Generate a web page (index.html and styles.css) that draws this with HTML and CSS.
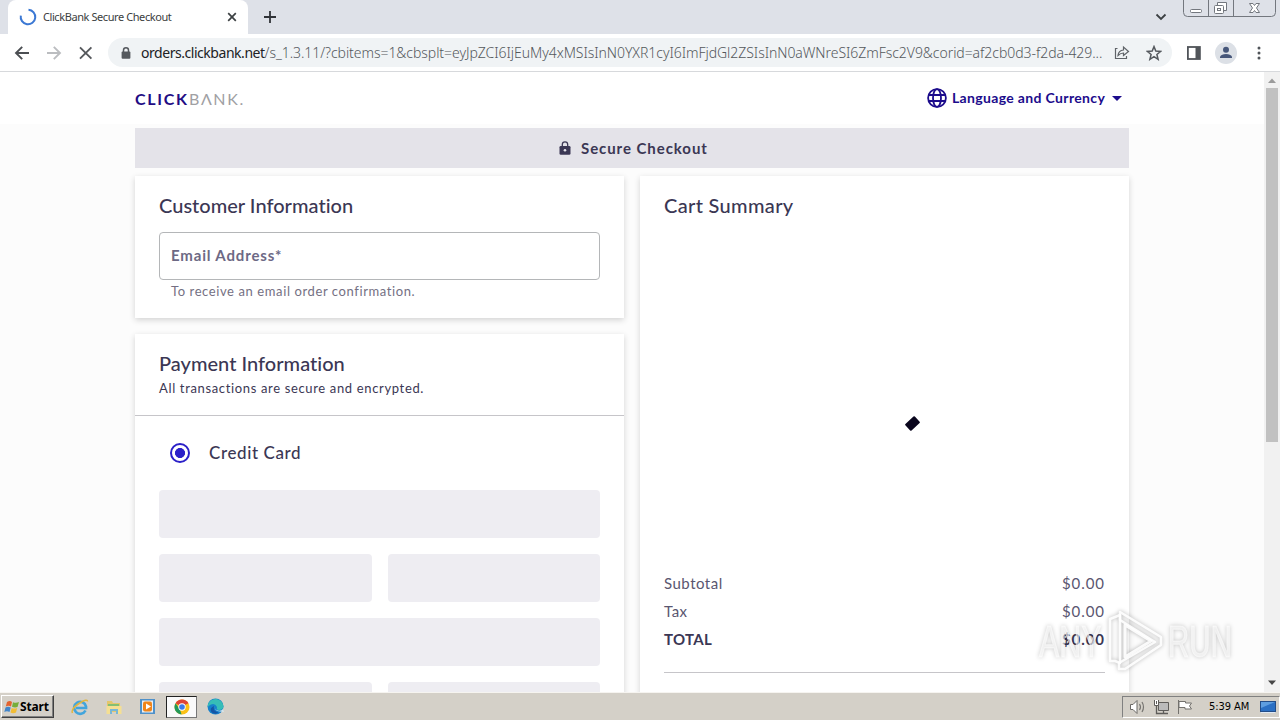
FILE: index.html
```html
<!DOCTYPE html>
<html lang="en">
<head>
<meta charset="utf-8">
<title>ClickBank Secure Checkout</title>
<link rel="stylesheet" href="styles.css">
</head>
<body>
<div class="screen">
  <header class="tabstrip">
    <div class="tab-edge"></div>
    <div class="tab">
      <svg class="spinner" width="18" height="18" viewBox="0 0 18 18"><path d="M9.5 1.7A7.3 7.3 0 1 1 1.8 7.6" fill="none" stroke="#3b78d4" stroke-width="2"/></svg>
      <span class="tab-title">ClickBank Secure Checkout</span>
      <svg width="10" height="10" viewBox="0 0 10 10"><path d="M1.2 1.2 8.8 8.8M8.8 1.2 1.2 8.8" stroke="#3c4043" stroke-width="1.7"/></svg>
    </div>
    <svg class="plus" width="12" height="12" viewBox="0 0 12 12"><path d="M6 0V12M0 6H12" stroke="#303338" stroke-width="1.8"/></svg>
    <svg class="chevron" width="12" height="8" viewBox="0 0 12 8"><path d="M1.5 1.5 6 6 10.5 1.5" fill="none" stroke="#3c4043" stroke-width="1.8"/></svg>
    <svg class="window-buttons" width="94" height="18" viewBox="0 0 94 18"><g fill="none" stroke="#73777e"><path d="M.5 0V12.5Q.5 16.5 4.500 16.500H88.500Q92.500 16.500 92.500 12.500V0M25.500 0V16M50.500 0V16"/><rect x="7.500" y="9.500" width="11" height="3" rx="1" fill="#fff"/><path d="M34.500 5V2.500H43.500V10.500H41" fill="#fff"/><rect x="31.500" y="5.500" width="9" height="8" rx="1" fill="#fff"/><rect x="34.500" y="8.500" width="3" height="2"/><path d="M66.500 3.500H70L71.500 5.500 73 3.500H76.500L73.500 8 76.500 12.500H73L71.500 10.500 70 12.500H66.500L69.500 8Z" fill="#fff"/></g></svg>
  </header>
  <nav class="toolbar">
    <svg class="nav-icons" width="80" height="16" viewBox="0 0 80 16"><g fill="none" stroke-width="1.9"><path d="M15 8H2M8.200 1.800 2 8 8.200 14.200" stroke="#4b4e52"/><path d="M33 8H46M39.800 1.800 46 8 39.800 14.200" stroke="#bbbdc0"/><path d="M66 2.300 77.400 13.700M77.400 2.300 66 13.700" stroke="#55585c"/></g></svg>
    <div class="omnibox">
      <svg class="lock" width="10" height="12" viewBox="0 0 10 12"><path d="M2.500 5V3.300A2.500 2.500 0 0 1 7.500 3.300V5" fill="none" stroke="#55595e" stroke-width="1.500"/><rect x=".6" y="4.500" width="8.800" height="7.300" rx="1" fill="#55595e"/></svg>
      <span class="url"><span class="host">orders.clickbank.net</span><span class="path">/s_1.3.11/?cbitems=1&amp;cbsplt=eyJpZCI6IjEuMy4xMSIsInN0YXR1cyI6ImFjdGl2ZSIsInN0aWNreSI6ZmFsc2V9&amp;corid=af2cb0d3-f2da-429...</span></span>
      <svg class="share" width="16" height="15" viewBox="0 0 16 15"><path d="M3.500 3.500H1.500V13.500H12.500V11M4 10.500Q4.500 5.500 9.500 5V2L14.500 6.500 9.500 10.500V8Q6.500 8 4 10.500Z" fill="none" stroke="#5f6368" stroke-width="1.200"/></svg>
      <svg width="16" height="16" viewBox="0 0 16 16"><path d="M8 1.600 9.800 6.100 14.700 6.400 10.900 9.500 12.100 14.300 8 11.600 3.900 14.300 5.100 9.500 1.300 6.400 6.200 6.100Z" fill="none" stroke="#55595e" stroke-width="1.500"/></svg>
    </div>
    <svg class="panel" width="14" height="14" viewBox="0 0 14 14"><rect x=".9" y="1" width="12" height="12" fill="#fff" stroke="#505459" stroke-width="1.800"/><path d="M8.500 1H13V13H8.500Z" fill="#505459"/></svg>
    <svg class="avatar" width="22" height="22" viewBox="0 0 22 22"><circle cx="11" cy="11" r="11" fill="#dce0e6"/><circle cx="11" cy="7.800" r="3" fill="#47577a"/><path d="M5 16V14.500Q6.500 12 11 12T17 14.500V16Z" fill="#47577a"/></svg>
    <svg class="kebab" width="4" height="14" viewBox="0 0 4 14"><g fill="#505459"><circle cx="2" cy="2" r="1.500"/><circle cx="2" cy="7" r="1.500"/><circle cx="2" cy="12" r="1.500"/></g></svg>
  </nav>

  <div class="viewport">
    <div class="page">
      <div class="site-header">
        <div class="wrap brand-row">
          <div class="brand"><span class="brand-a">CLICK</span><span class="brand-b">BΛNK.</span></div>
          <div class="language">
            <svg width="20" height="20" viewBox="0 0 20 20"><g fill="none" stroke="#1c0c8c" stroke-width="1.800"><circle cx="10" cy="10" r="8.900"/><ellipse cx="10" cy="10" rx="4" ry="8.900"/><path d="M1.700 7H18.300M1.700 13H18.300"/></g></svg>
            <span class="language-label">Language and Currency</span>
            <svg width="10" height="5" viewBox="0 0 10 5"><path d="M0 0H10L5 5Z" fill="#1c0c8c"/></svg>
          </div>
        </div>
      </div>
      <main class="wrap">
        <div class="secure">
          <svg width="12" height="14" viewBox="0 0 12 14"><path d="M3.300 6V3.500A2.700 2.700 0 0 1 8.700 3.500V6" fill="none" stroke="#3b3754" stroke-width="1.300"/><rect x=".5" y="5" width="11" height="8.800" rx="1.300" fill="#3b3754"/><circle cx="6" cy="9.300" r="1.300" fill="#e4e3e9"/></svg>
          <span class="secure-label">Secure Checkout</span>
        </div>
        <div class="columns">
          <div class="left">
            <section class="card customer">
              <h2>Customer Information</h2>
              <div class="field">Email Address*</div>
              <p class="hint">To receive an email order confirmation.</p>
            </section>
            <section class="card payment">
              <div class="payment-head">
                <h2>Payment Information</h2>
                <p class="note">All transactions are secure and encrypted.</p>
              </div>
              <div class="method"><span class="radio"></span><span class="method-name">Credit Card</span></div>
              <div class="skeletons">
                <i class="bone wide"></i><i class="bone"></i><i class="bone"></i><i class="bone wide"></i><i class="bone"></i><i class="bone"></i>
              </div>
            </section>
          </div>
          <section class="card cart">
            <h2 class="cart-title">Cart Summary</h2>
            <div class="loading"><i class="block"></i></div>
            <div class="totals">
              <div class="line"><span>Subtotal</span><span class="amount">$0.00</span></div>
              <div class="line"><span>Tax</span><span class="amount">$0.00</span></div>
              <div class="line total"><span>TOTAL</span><span class="amount">$0.00</span></div>
            </div>
          </section>
        </div>
      </main>
    </div>
    <div class="scrollbar">
      <svg width="16" height="16" viewBox="0 0 16 16"><path d="M4 11 8 6.500 12 11Z" fill="#9b9b9b"/></svg>
      <i class="thumb"></i>
      <svg class="down" width="16" height="16" viewBox="0 0 16 16"><path d="M4 5.500H12L8 10Z" fill="#454545"/></svg>
    </div>
    <div class="watermark">
      <span class="wm-any">ANY</span>
      <svg width="58" height="64" viewBox="0 0 58 64"><g fill="none" stroke="#fff" stroke-opacity=".9" stroke-linejoin="round"><path d="M9 52H4V10L14 6V54Z" stroke-width="2.500"/><path d="M19 16V48L45 32Z" stroke-width="3"/><path d="M14 3 55 28V36L19 60H13V54L49 33 14 11Z" stroke-width="2.500"/></g></svg>
      <span class="wm-run">RUN</span>
    </div>
  </div>

  <footer class="taskbar">
    <div class="start">
      <svg width="16" height="16" viewBox="0 0 16 16"><path d="M3 3Q6 1 8 3L7 7.500Q4.500 6 1.800 7.500Z" fill="#e3632f"/><path d="M9 3.200Q12 4.500 15 3L13.500 8Q11 9 8 7.800Z" fill="#76ad39"/><path d="M1.500 8.500Q4 7 6.700 8.500L5.500 13Q3 11.500.3 13Z" fill="#4185ca"/><path d="M7.700 9Q10 10 13.200 9L12 13.500Q9 15 6.500 13.500Z" fill="#f2bd35"/></svg>
      <span class="start-label">Start</span>
    </div>
    <div class="apps">
      <svg width="18" height="18" viewBox="0 0 18 18"><path d="M14.500 12.500A6 6 0 1 1 15 8.500V10H5" fill="none" stroke="#42a5dc" stroke-width="2.700"/><path d="M1.500 15Q-.5 11 8 5.500T16.500 3.500" fill="none" stroke="#e2b63e" stroke-width="1.500"/></svg>
      <svg width="18" height="18" viewBox="0 0 18 18"><path d="M2 3H7L8 5H15V14H2Z" fill="#e4c66b"/><path d="M3 6H14V9H3Z" fill="#83bf74"/><path d="M1.500 8H16.500V16H12V12H6V16H1.500Z" fill="#f5df92"/><path d="M5 16V11H13V16H11V13H7V16Z" fill="#78b7d5"/></svg>
      <svg width="18" height="18" viewBox="0 0 18 18"><rect x="1" y="1" width="15" height="15" fill="#4f91c9"/><rect x="3" y="2.500" width="11" height="12" fill="#e9eff5"/><rect x="4" y="3.500" width="9" height="10" rx="2" fill="#f0851a"/><path d="M7 5.500 12 8.500 7 11.500Z" fill="#fff"/></svg>
      <span class="active-app"><svg width="16" height="16" viewBox="0 0 16 16"><circle cx="8" cy="8" r="7.500" fill="#fbc116"/><path d="M8 8 1.500 4.200A7.500 7.500 0 0 1 14.500 4.200L11 6Z" fill="#df4437"/><path d="M1.500 4.200 6 10.500 7.500 15.500A7.500 7.500 0 0 1 1.500 4.200Z" fill="#23995a"/><circle cx="8" cy="8" r="3.700" fill="#fff"/><circle cx="8" cy="8" r="2.800" fill="#3b7bea"/></svg></span>
      <svg class="edge" width="17" height="17" viewBox="0 0 17 17"><circle cx="8.500" cy="8.500" r="8" fill="#1680cb"/><path d="M.8 7A8 8 0 0 1 16.500 8Q16.300 12 12 12 9 12 10 9 8 5 4 6.500 1.500 7.500.8 9Z" fill="#36bdb7"/><path d="M7 8Q5.500 13 11.500 14.500 8 17 4.500 14.300 2 10 7 8Z" fill="#1555a5"/><path d="M8 8Q7 12 12 12.800 15 13 15.800 11L17 14 13 13.500Q7 13 8 8Z" fill="#d5e7ed"/></svg>
    </div>
    <div class="tray">
      <svg class="sound" width="18" height="16" viewBox="0 0 18 16"><path d="M1.500 5.500H4L8 1.500V14.500L4 10.500H1.500Z" fill="#fff" stroke="#6b6965"/><path d="M10.500 5Q12.500 8 10.500 11M13 3Q16 8 13 13" fill="none" stroke="#777571" stroke-width="1.200"/></svg>
      <svg class="network" width="17" height="16" viewBox="0 0 17 16"><path d="M5.500 3.500H15.500V11.500H5.500Z" fill="#bbb" stroke="#5f5d5a"/><path d="M4.500 14.500H15M10.500 12V14M3.500 6V14.500H5" fill="none" stroke="#5f5d5a" stroke-width="1.300"/><path d="M1.500 1V6.500H5.500V1M3.500 2V5" fill="#fff" stroke="#5f5d5a"/></svg>
      <svg class="flag" width="16" height="16" viewBox="0 0 16 16"><path d="M1.500 1V15M2 2.500H8.500V4H14.500L12.500 7 14.500 10H8V8.500H2Z" fill="#fff" stroke="#73716d"/></svg>
      <span class="clock">5:39 AM</span>
      <svg class="desktop" width="16" height="14" viewBox="0 0 16 14"><rect x=".5" y="1.500" width="15" height="10" fill="#2b70c4" stroke="#234d88"/><path d="M1 2H15L1 8Z" fill="#5e9ee0"/><path d="M1 12.500H15" stroke="#dfe9f5"/></svg>
    </div>
  </footer>
</div>
</body>
</html>
```
FILE: styles.css
```css
* { box-sizing: border-box; }
body { margin: 0; overflow: hidden; }
svg { display: block; flex: none; }
h2, p { margin: 0; }
.screen { width: 1280px; height: 720px; display: flex; flex-direction: column; font-family: "Noto Sans", sans-serif; color: #3b3754; }
.screen span { white-space: nowrap; }

.tabstrip { height: 34px; flex: none; display: flex; background: #dee1e8; }
.tab-edge { width: 8px; }
.tab { width: 240px; display: flex; align-items: center; padding: 0 11px; background: #fff; border-radius: 8px 8px 0 0; }
.spinner { margin-right: 6px; }
.tab-title { flex: 1; padding-bottom: 1px; font-size: 11px; letter-spacing: -.42px; color: #3b3d40; }
.plus { margin: 11px 0 0 16px; }
.chevron { margin: 13px 16px 0 auto; }
.window-buttons { margin-right: 3px; }

.toolbar { height: 38px; flex: none; display: flex; align-items: center; background: #fff; border-bottom: 1px solid #d7d9dc; }
.nav-icons { margin-left: 14px; }
.omnibox { width: 1064px; height: 29px; margin-left: 14px; padding: 0 10px 0 13px; display: flex; align-items: center; border-radius: 15px; background: #f0f3f5; }
.url { width: 963px; margin-left: 10px; font-size: 14px; font-weight: 300; color: #54585c; }
.host { color: #202124; letter-spacing: -.46px; font-weight: 400; }
.path { letter-spacing: -.05px; }
.share { margin: 0 16px 0 10px; }
.panel { margin-left: 15px; }
.avatar { margin-left: 14px; }
.kebab { margin-left: 20px; }

.viewport { position: relative; height: 620px; flex: none; display: flex; overflow: hidden; }
.page { width: 1264px; overflow: hidden; background: #fcfcfc; font-family: Lato, sans-serif; }
.wrap { width: 994px; margin-left: 135px; }
.site-header { height: 52px; background: #fff; }
.brand-row { height: 52px; display: flex; align-items: center; justify-content: space-between; padding-right: 7px; }
.brand { display: flex; padding-top: 1px; font-size: 16px; line-height: 20px; }
.brand-a { width: 54px; font-weight: 700; color: #220b84; letter-spacing: 1.7px; }
.brand-b { color: #a0a0a3; letter-spacing: 1.6px; }
.language { display: flex; align-items: center; color: #1c0c8c; }
.language-label { width: 153px; margin: 0 7px 0 5px; padding-bottom: 2px; font-size: 14px; font-weight: 700; letter-spacing: .34px; }
.secure { height: 40px; margin-top: 4px; display: flex; align-items: center; justify-content: center; gap: 10px; background: #e4e3e9; padding-left: 4px; }
.secure-label { width: 128px; padding-bottom: 1px; font-size: 15px; font-weight: 700; letter-spacing: .93px; }
.columns { display: grid; grid-template-columns: 489px 489px; gap: 16px; margin-top: 8px; height: 620px; }
.left { display: flex; flex-direction: column; gap: 16px; }
.card { background: #fff; box-shadow: 0 2px 6px rgba(0,0,0,.17); }
.card h2 { font-size: 20px; line-height: 24px; font-weight: 500; letter-spacing: .02px; white-space: nowrap; }
.card .cart-title { letter-spacing: .33px; }
.customer { height: 142px; padding: 17px 24px 0; }
.field { height: 48px; margin-top: 15px; padding: 0 0 2px 11px; border: 1px solid #b4b6b8; border-radius: 4px; display: flex; align-items: center; color: #6d6985; font-size: 15px; font-weight: 700; letter-spacing: .84px; }
.hint { padding-left: 12px; font-size: 13px; line-height: 22px; letter-spacing: .6px; color: #747083; }
.payment { flex: 1; }
.payment-head { height: 82px; padding: 17px 24px 0; border-bottom: 1px solid #c6c5c9; }
.note { font-size: 13px; line-height: 26px; letter-spacing: .65px; }
.method { height: 74px; display: flex; align-items: center; padding-left: 35px; gap: 19px; font-size: 17px; font-weight: 500; letter-spacing: .6px; }
.method-name { padding-bottom: 2px; }
.radio { width: 20px; height: 20px; border: 2px solid #2b20c8; border-radius: 50%; background: radial-gradient(circle, #2b20c8 0 4.700px, #fff 5.300px); }
.skeletons { margin: 0 24px; display: grid; grid-template-columns: 213px 212px; gap: 16px; }
.bone { height: 48px; border-radius: 4px; background: #eeedf2; }
.wide { grid-column: span 2; }
.cart { padding: 17px 24px 0; }
.loading { height: 352px; display: flex; align-items: center; justify-content: center; padding: 61px 0 0 56px; }
.block { width: 13px; height: 9px; border-radius: 1px; background: #09051d; transform: rotate(-43deg); }
.totals { height: 104px; border-bottom: 1px solid #c6c5c9; }
.line { display: flex; justify-content: space-between; height: 28px; line-height: 28px; font-size: 15px; letter-spacing: .5px; color: #5a5670; }
.amount { letter-spacing: .95px; }
.total { font-weight: 700; color: #3b3754; letter-spacing: .3px; }
.scrollbar { width: 16px; background: #f1f1f1; display: flex; flex-direction: column; }
.thumb { width: 12px; height: 354px; margin-left: 2px; background: #c1c1c1; }
.down { margin: auto 0 1px; }
.watermark { position: absolute; left: 1039px; top: 536px; display: flex; align-items: center; font: 44px/64px "Liberation Sans", sans-serif; color: rgba(255,255,255,.6); filter: drop-shadow(0 0 2px rgba(0,0,0,.32)); }
.wm-any, .wm-run { display: block; width: 66px; padding-top: 2px; transform-origin: left center; transform: scaleX(.69); -webkit-text-stroke: 1px rgba(255,255,255,.5); }
.wm-run { transform: scaleX(.67); }
.watermark svg { margin: 0 4px 0 1px; }

.taskbar { height: 28px; flex: none; display: flex; align-items: center; background: #d4d0c8; border-top: 1px solid #f6f4f0; color: #000; font-family: "DejaVu Sans Condensed", "Noto Sans", sans-serif; }
.start { width: 53px; height: 23px; margin-left: 1px; padding-left: 2px; display: flex; align-items: center; border: 1px solid #fff; border-right-color: #404040; border-bottom-color: #404040; box-shadow: inset -1px -1px #808080; font: 700 12px "Noto Sans", sans-serif; }
.start-label { letter-spacing: -.15px; }
.apps { display: flex; align-items: center; margin-left: 17px; gap: 16px; }
.active-app { width: 31px; height: 22px; display: flex; align-items: center; justify-content: center; margin-left: -7px; border: 1px solid #777; border-top-color: #222; border-left-color: #222; background: #fafafa; }
.edge { margin-left: -6px; }
.tray { width: 158px; height: 22px; margin-left: auto; padding-left: 6px; display: flex; align-items: center; border: 1px solid #808080; border-right-color: #fff; border-bottom-color: #fff; }
.network { margin-left: 6px; }
.flag { margin-left: 7px; }
.clock { width: 44px; margin-left: 16px; font-size: 11px; letter-spacing: -.05px; }
.desktop { margin-left: 7px; }
```
